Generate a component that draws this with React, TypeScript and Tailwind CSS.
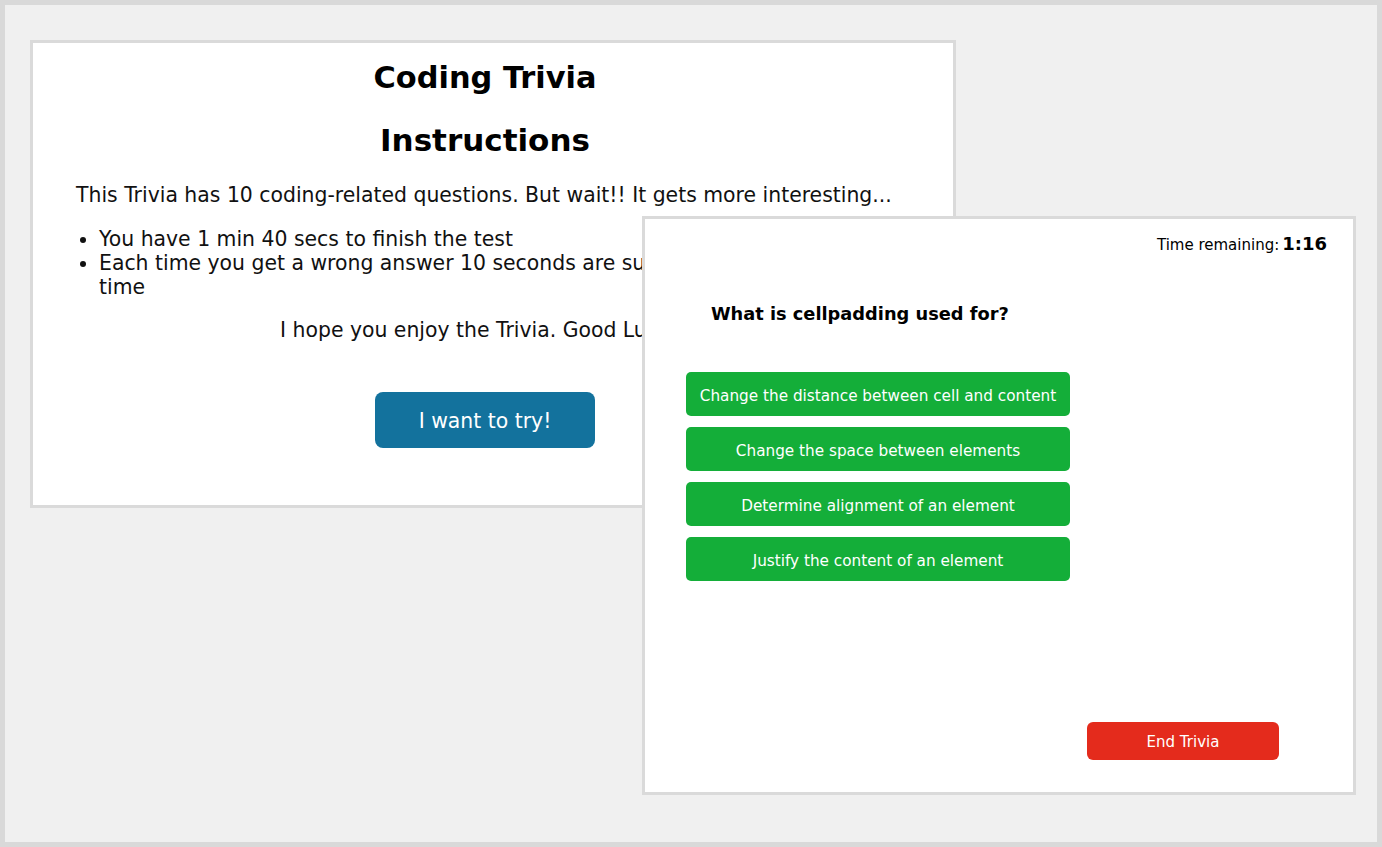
import React from 'react';

const answers = [
  'Change the distance between cell and content',
  'Change the space between elements',
  'Determine alignment of an element',
  'Justify the content of an element',
];

function IntroCard() {
  return (
    <div className="w-[926px] h-[468px] border-[3px] border-[#dadada] bg-white pt-[19px] pl-[43px] pr-[59px] text-[#111]">
      <h2 className="text-center text-[30.4px] leading-[32px] font-bold text-black">Coding Trivia</h2>
      <h1 className="mt-[28px] text-center text-[31px] leading-[36px] font-bold text-black">Instructions</h1>
      <p className="mt-[25px] -mr-[16px] text-[20.4px] leading-[24px]">
        This Trivia has 10 coding-related questions. But wait!! It gets more interesting...
      </p>
      <ul className="mt-[20px] list-disc pl-[23px] text-[20.4px] leading-[24px]">
        <li>You have 1 min 40 secs to finish the test</li>
        <li>
          Each time you get a wrong answer 10 seconds are subtracted from your
          <br />
          time
        </li>
      </ul>
      <p className="mt-[19px] -ml-[12px] text-center text-[20.4px] leading-[24px]">I hope you enjoy the Trivia. Good Luck!</p>
      <div className="mt-[50px] flex justify-center">
        <button className="w-[220px] h-[56px] pt-[2px] rounded-[8px] bg-[#13729d] text-white text-[20.4px]">I want to try!</button>
      </div>
    </div>
  );
}

function QuizCard() {
  return (
    <div className="absolute left-[637px] top-[211px] w-[714px] h-[579px] border-[3px] border-[#dadada] bg-white flex flex-col pb-[32px]">
      <div className="flex justify-end items-baseline pt-[14px] pr-[26px] text-black">
        <span className="text-[15px] leading-[22px]">Time remaining:</span>
        <span className="ml-[3px] text-[18px] leading-[22px] font-bold">1:16</span>
      </div>
      <h3 className="mt-[47px] ml-[66px] text-[17.8px] leading-[22px] font-bold text-black">What is cellpadding used for?</h3>
      <div className="mt-[47px] ml-[41px] w-[384px] flex flex-col gap-[11px]">
        {answers.map((a) => (
          <button
            key={a}
            className="h-[44px] w-full pt-[4px] rounded-[5px] bg-[#14ae39] text-white text-[15.25px] whitespace-nowrap flex items-center justify-center"
          >
            {a}
          </button>
        ))}
      </div>
      <div className="mt-auto flex justify-end pr-[74px]">
        <button className="w-[192px] h-[38px] pt-[3px] rounded-[6px] bg-[#e42b1c] text-white text-[15px]">End Trivia</button>
      </div>
    </div>
  );
}

export default function App() {
  return (
    <div
      className="relative w-[1382px] h-[847px] border-[5px] border-[#d9d9d9] bg-[#f0f0f0] pl-[25px] pt-[35px] overflow-hidden"
      style={{ fontFamily: '"DejaVu Sans", Verdana, sans-serif' }}
    >
      <IntroCard />
      <QuizCard />
    </div>
  );
}
